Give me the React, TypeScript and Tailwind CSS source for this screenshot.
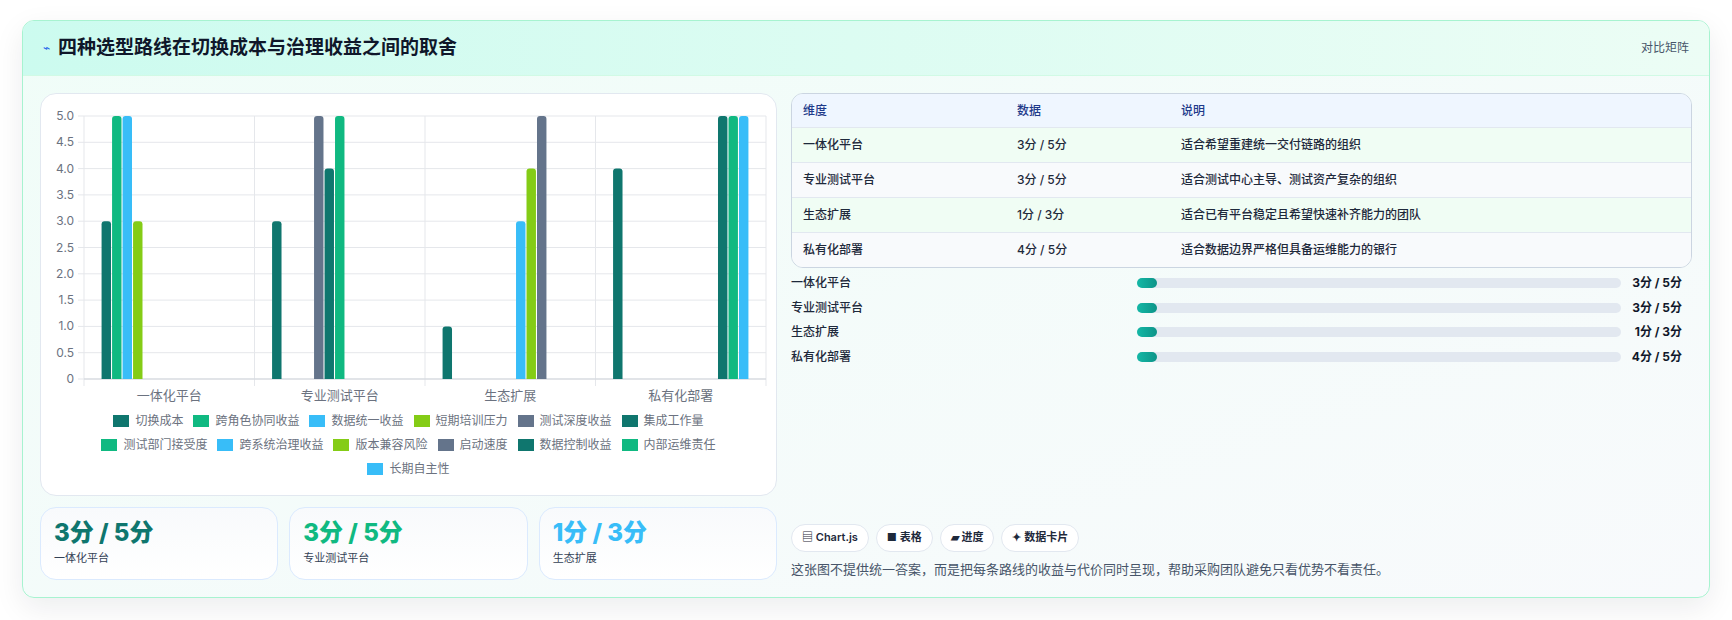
import React from "react";

const COLORS = ["#0f766e", "#10b981", "#38bdf8", "#84cc16", "#64748b"];

const series = [
  "切换成本",
  "跨角色协同收益",
  "数据统一收益",
  "短期培训压力",
  "测试深度收益",
  "集成工作量",
  "测试部门接受度",
  "跨系统治理收益",
  "版本兼容风险",
  "启动速度",
  "数据控制收益",
  "内部运维责任",
  "长期自主性",
];

const categories = ["一体化平台", "专业测试平台", "生态扩展", "私有化部署"];

// values per category, indexed by series slot
const values: Record<number, number>[] = [
  { 0: 3, 1: 5, 2: 5, 3: 3 },
  { 0: 3, 4: 5, 5: 4, 6: 5 },
  { 0: 1, 7: 3, 8: 4, 9: 5 },
  { 0: 4, 10: 5, 11: 5, 12: 5 },
];

const rows = [
  { name: "一体化平台", score: "3分 / 5分", note: "适合希望重建统一交付链路的组织" },
  { name: "专业测试平台", score: "3分 / 5分", note: "适合测试中心主导、测试资产复杂的组织" },
  { name: "生态扩展", score: "1分 / 3分", note: "适合已有平台稳定且希望快速补齐能力的团队" },
  { name: "私有化部署", score: "4分 / 5分", note: "适合数据边界严格但具备运维能力的银行" },
];

function BarChart() {
  const x0 = 43;
  const x1 = 725;
  const y0 = 22;
  const y1 = 285;
  const catW = (x1 - x0) / 4;
  const slot = (catW * 0.8) / 13;
  const barW = slot * 0.9;
  const yOf = (v: number) => y1 - ((y1 - y0) * v) / 5;
  const ticks = [0, 0.5, 1, 1.5, 2, 2.5, 3, 3.5, 4, 4.5, 5];

  return (
    <svg width="737" height="316" className="block">
      {ticks.map((t) => (
        <g key={t}>
          <line x1={x0 - 6} x2={x1} y1={yOf(t)} y2={yOf(t)} stroke="#e5e7eb" />
          <text x={x0 - 10} y={yOf(t) + 4} textAnchor="end" fontSize="12" fill="#6b7280">
            {t === 0 ? "0" : t.toFixed(1)}
          </text>
        </g>
      ))}
      {[0, 1, 2, 3, 4].map((i) => (
        <line
          key={i}
          x1={x0 + catW * i}
          x2={x0 + catW * i}
          y1={y0}
          y2={y1 + 7}
          stroke="#e5e7eb"
        />
      ))}
      <line x1={x0} x2={x1} y1={y1} y2={y1} stroke="#d1d5db" />
      {categories.map((c, ci) => {
        const start = x0 + catW * ci + catW * 0.1;
        return (
          <g key={c}>
            {Object.entries(values[ci]).map(([k, v]) => {
              const s = Number(k);
              const x = start + slot * s + (slot - barW) / 2;
              const top = yOf(v);
              return (
                <path
                  key={k}
                  d={`M${x} ${y1} V${top + 3} Q${x} ${top} ${x + 3} ${top} H${x + barW - 3} Q${x + barW} ${top} ${x + barW} ${top + 3} V${y1} Z`}
                  fill={COLORS[s % 5]}
                />
              );
            })}
            <text
              x={x0 + catW * ci + catW / 2}
              y={y1 + 21}
              textAnchor="middle"
              fontSize="13"
              fill="#6b7280"
            >
              {c}
            </text>
          </g>
        );
      })}
    </svg>
  );
}

export default function App() {
  return (
    <div
      className="min-h-[620px] bg-white px-[22px] pt-[20px]"
      style={{ fontFamily: "Inter, 'Noto Sans CJK SC', sans-serif" }}
    >
      <div className="h-[578px] overflow-hidden rounded-xl border border-[#a7f3d0] bg-gradient-to-br from-[#f0fdf8] to-[#f8fafc] shadow-[0_10px_30px_rgba(15,23,42,0.08)]">
        {/* header */}
        <div className="flex h-[55px] items-center justify-between border-b border-[#d1fae5] bg-gradient-to-r from-[#ccfbef] to-[#ecfdf5] px-5">
          <div className="flex items-center gap-2">
            <span className="text-[12px] text-[#2563eb]">⌁</span>
            <h1 className="text-[19px] font-bold text-[#0f172a]">
              四种选型路线在切换成本与治理收益之间的取舍
            </h1>
          </div>
          <span className="text-[12px] text-[#475569]">对比矩阵</span>
        </div>

        {/* body */}
        <div className="grid grid-cols-[737px_1fr] gap-[14px] px-[17px] pt-[17px]">
          <div className="flex flex-col gap-[11px]">
            <div className="h-[403px] rounded-2xl border border-[#e2e8f0] bg-white">
              <BarChart />
              <div className="mx-auto mt-[2px] flex w-[680px] flex-wrap justify-center gap-x-[10px] gap-y-[6px]">
                {series.map((s, i) => (
                  <div key={s} className="flex items-center gap-[6px] text-[12px] text-[#6b7280]">
                    <span className="h-[12px] w-[16px]" style={{ background: COLORS[i % 5] }} />
                    {s}
                  </div>
                ))}
              </div>
            </div>
            <div className="grid grid-cols-3 gap-[11px]">
              {[
                { v: "3分 / 5分", l: "一体化平台", c: "text-[#0f766e]" },
                { v: "3分 / 5分", l: "专业测试平台", c: "text-[#10b981]" },
                { v: "1分 / 3分", l: "生态扩展", c: "text-[#38bdf8]" },
              ].map((k) => (
                <div
                  key={k.l}
                  className="h-[73px] rounded-2xl border border-[#dbeafe] bg-gradient-to-b from-[#f8fafc] to-white px-[13px] pt-[8px]"
                >
                  <div className={`text-[24px] font-extrabold leading-[34px] ${k.c}`}>{k.v}</div>
                  <div className="text-[11px] text-[#334155]">{k.l}</div>
                </div>
              ))}
            </div>
          </div>

          <div className="flex flex-col pr-[10px]">
            <div className="-mr-[10px] overflow-hidden rounded-xl border border-[#cbd5e1] text-[12px] font-medium text-[#1e293b]">
              <div className="grid h-[33px] grid-cols-[214px_164px_1fr] items-center bg-[#eff6ff] px-[11px] text-[#1e3a8a]">
                <span>维度</span>
                <span>数据</span>
                <span>说明</span>
              </div>
              {rows.map((r, i) => (
                <div
                  key={r.name}
                  className={`grid h-[35px] grid-cols-[214px_164px_1fr] items-center border-t border-[#e2e8f0] px-[11px] ${
                    i % 2 === 0 ? "bg-[#f0fdf4]" : "bg-[#f8fafc]"
                  }`}
                >
                  <span>{r.name}</span>
                  <span>{r.score}</span>
                  <span>{r.note}</span>
                </div>
              ))}
            </div>

            <div className="mt-[10px] flex flex-col gap-[14.5px]">
              {rows.map((r) => (
                <div key={r.name} className="flex h-[10px] items-center text-[12px] font-medium text-[#1e293b]">
                  <span className="w-[346px]">{r.name}</span>
                  <div className="h-[10px] w-[484px] rounded-full bg-[#e2e8f0]">
                    <div className="h-full w-[20px] rounded-full bg-gradient-to-r from-[#14b8a6] to-[#0d9488]" />
                  </div>
                  <span className="ml-auto font-bold text-[#0f172a]">{r.score}</span>
                </div>
              ))}
            </div>

            <div className="mt-auto flex gap-[7px]">
              {["▤ Chart.js", "■ 表格", "▰ 进度", "✦ 数据卡片"].map((t) => (
                <span
                  key={t}
                  className="flex h-[28px] items-center rounded-full border border-[#e2e8f0] bg-white px-[10px] text-[11px] font-semibold text-[#1e293b]"
                >
                  {t}
                </span>
              ))}
            </div>
            <p className="mt-[8px] mb-[1px] text-[13px] text-[#475569]">
              这张图不提供统一答案，而是把每条路线的收益与代价同时呈现，帮助采购团队避免只看优势不看责任。
            </p>
          </div>
        </div>
      </div>
    </div>
  );
}
